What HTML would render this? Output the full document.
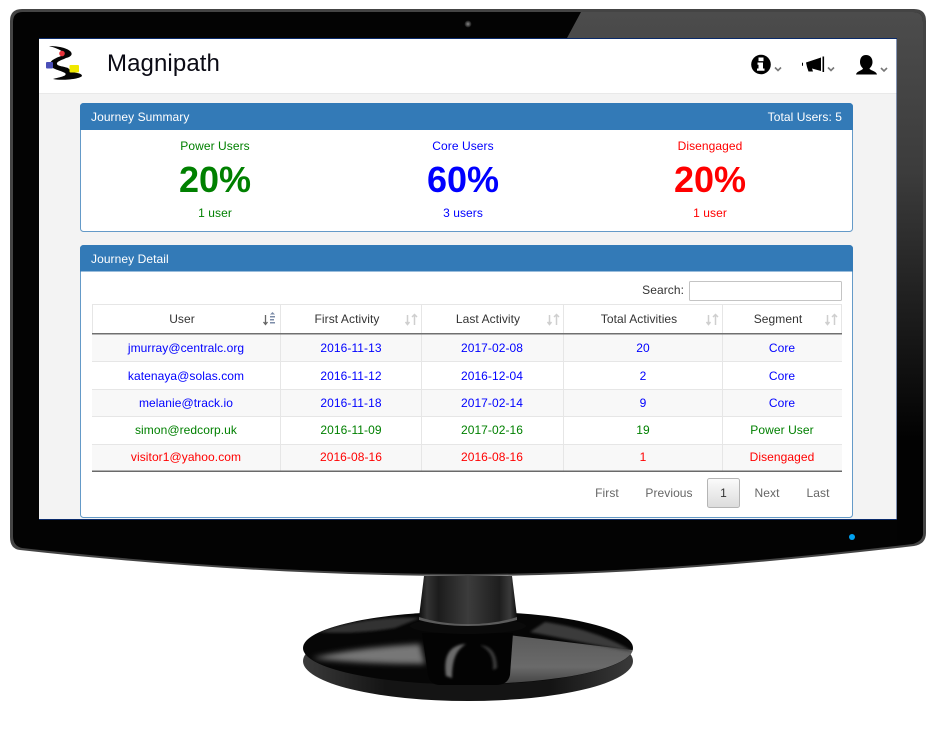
<!DOCTYPE html>
<html>
<head>
<meta charset="utf-8">
<style>
html,body{margin:0;padding:0;background:#fff;width:942px;height:738px;overflow:hidden}
body{position:relative;font-family:"Liberation Sans",Arial,sans-serif;font-size:12px;color:#333}
svg.abs{position:absolute;left:0;top:0}
.t{position:absolute;white-space:nowrap;line-height:14px;letter-spacing:.07px}
.c{transform:translateX(-50%)}
.r{transform:translateX(-100%)}
.blue{color:#0000ff}.green{color:#008000}.red{color:#ff0000}
</style>
</head>
<body>
<svg class="abs" width="942" height="738" viewBox="0 0 942 738">
<defs>
<linearGradient id="wedge" x1="0" y1="0" x2="0" y2="1">
<stop offset="0" stop-color="#4c4c4c"/><stop offset=".3" stop-color="#3c3c3c"/><stop offset=".62" stop-color="#161616"/><stop offset=".8" stop-color="#020202"/><stop offset="1" stop-color="#020202"/>
</linearGradient>
<linearGradient id="neck" x1="0" y1="0" x2="1" y2="0">
<stop offset="0" stop-color="#0c0c0c"/><stop offset=".08" stop-color="#333"/><stop offset=".2" stop-color="#1c1c1c"/><stop offset=".5" stop-color="#3c3c3c"/><stop offset=".82" stop-color="#1e1e1e"/><stop offset=".93" stop-color="#3a3a3a"/><stop offset="1" stop-color="#0c0c0c"/>
</linearGradient>
<linearGradient id="baseR" x1="0" y1="0" x2="0" y2="1">
<stop offset="0" stop-color="#5a5a5a"/><stop offset=".5" stop-color="#6a6a6a"/><stop offset="1" stop-color="#1f1f1f"/>
</linearGradient>
<linearGradient id="lip" x1="0" y1="0" x2="1" y2="0">
<stop offset="0" stop-color="#3a3a3a"/><stop offset=".25" stop-color="#141414"/><stop offset=".75" stop-color="#141414"/><stop offset="1" stop-color="#3a3a3a"/>
</linearGradient>
<radialGradient id="glow"><stop offset="0" stop-color="#888"/><stop offset="1" stop-color="#111"/></radialGradient>
<filter id="bl1" x="-20%" y="-50%" width="140%" height="200%"><feGaussianBlur stdDeviation="3"/></filter>
<filter id="bl2" x="-30%" y="-30%" width="160%" height="160%"><feGaussianBlur stdDeviation="1.200"/></filter>
<clipPath id="top"><ellipse cx="468" cy="648" rx="165" ry="36"/></clipPath>
<linearGradient id="pg" x1="0" y1="0" x2="0" y2="1"><stop offset="0" stop-color="#fbfbfb"/><stop offset="1" stop-color="#dcdcdc"/></linearGradient>
</defs>
<!-- stand -->
<ellipse cx="468" cy="661" rx="165" ry="40" fill="url(#lip)"/>
<ellipse cx="468" cy="648" rx="165" ry="36.500" fill="#060606"/>
<g clip-path="url(#top)">
<path d="M312 658C345 650 385 646 420 644L425 664C385 664 340 662 312 658Z" fill="#777" filter="url(#bl1)"/>
<path d="M500 634L640 651L640 700H500Z" fill="url(#baseR)"/>
<path d="M545 622C585 628 615 640 633 652C600 646 570 640 530 632Z" fill="#3a3a3a" filter="url(#bl2)"/>
<path d="M318 632C350 620 395 616 420 618L395 628C370 632 345 634 318 632Z" fill="#333" filter="url(#bl2)"/>
</g>
<path d="M422 633H513L510 675Q508 685 496 685H440Q430 685 428 675Z" fill="#030303"/>
<g filter="url(#bl2)">
<path d="M446 676C443 655 450 645 466 644C456 650 452 660 452 678Z" fill="#6a6a6a"/>
<path d="M480 645C490 646 497 652 497 668L493 670C494 656 489 650 480 645Z" fill="#3a3a3a"/>
</g>
<ellipse cx="468" cy="626" rx="58" ry="8" fill="#0a0a0a"/>
<path d="M424 576H512L517 617Q500 624 468 624T419 617Z" fill="url(#neck)"/>
<path d="M419 617Q440 624 468 624T517 617L517 620Q495 626 468 626T419 620Z" fill="#5c5c5c"/>
<!-- bezel -->
<path d="M22 9H914Q926 9 926 21V533Q926 544 914 546C760 564 610 576 468 576C320 576 165 566 20 550Q10 549 10 537V21Q10 9 22 9Z" fill="#444"/>
<path d="M23 12H913Q923 12 923 22V533Q923 541 913 544C760 562 610 574 468 574C320 574 165 564 22 548Q13 546 13 536V22Q13 12 23 12Z" fill="#030303"/>
<path d="M581 12H913Q923 12 923 22V533Q923 541 913 543L897 545V38H567Z" fill="url(#wedge)"/>
<circle cx="468" cy="24" r="3.500" fill="url(#glow)"/>
<circle cx="852" cy="537" r="3" fill="#00a2f2"/>
<!-- screen -->
<rect x="39" y="38" width="858" height="482" fill="#0a2a6a"/>
<rect x="39" y="39" width="857.500" height="480" fill="#f3f3f3"/>
<rect x="39" y="39" width="857.500" height="54" fill="#fff"/>
<rect x="39" y="93" width="857.500" height="1" fill="#e9e9e9"/>
<!-- logo -->
<path d="M49 46C58 46 68 48 71 52C73 55 70 57 66 58C62 60 58 61 57 63C56 66 62 66 68 68L72 72C76 73 82 73 82 76C80 79 62 81 53 79C60 77 68 76 65 73C60 70 50 69 50 64C50 60 58 57 64 55C66 53 60 49 49 46Z" fill="#050505"/>
<circle cx="62" cy="53.500" r="2.800" fill="#e8343c"/>
<rect x="46" y="62" width="7" height="6.500" rx="1" fill="#4a4fb8"/>
<rect x="69.500" y="65" width="9.500" height="7.500" rx="1" fill="#f0e800"/>
<!-- info icon -->
<circle cx="761" cy="64.500" r="9.800" fill="#000"/>
<path d="M758.500 57.500h5v3.600h-5zM757.500 62.500h5.500v6h1.500v2.300h-7.500v-2.300h1.500v-3.700h-1z" fill="#fff"/>
<path d="M775 67.500l3 3 3-3" fill="none" stroke="#777" stroke-width="1.600"/>
<!-- megaphone -->
<path d="M802 63l1-.5v3.500l-1-.5zM806 62.500L821 57.500V71L812 68.500L813 71.500H808.500L807 67Z" fill="#000"/>
<rect x="822.500" y="56.500" width="1.600" height="15.500" fill="#000"/>
<path d="M828 67.500l3 3 3-3" fill="none" stroke="#777" stroke-width="1.600"/>
<!-- user -->
<path d="M866 55C870 55 872.500 58 872.500 62C872.500 65 871 67 869.500 68.500C870 70.500 876.500 71 877 74.500H856C856.500 71 862.500 70.500 863 68.500C861.500 67 860 65 860 62C860 58 862 55 866 55Z" fill="#000"/>
<path d="M881 68l3 3 3-3" fill="none" stroke="#777" stroke-width="1.600"/>
<!-- panels -->
<rect x="80.500" y="103.500" width="772" height="128" rx="3" fill="#fff" stroke="#337ab7" stroke-opacity=".75"/>
<path d="M84 103H849Q853 103 853 107V130H80V107Q80 103 84 103Z" fill="#337ab7"/>
<rect x="80.500" y="245.500" width="772" height="272" rx="3" fill="#fff" stroke="#337ab7" stroke-opacity=".75"/>
<path d="M84 245H849Q853 245 853 249V271.500H80V249Q80 245 84 245Z" fill="#337ab7"/>
<!-- table -->
<rect x="92" y="334" width="750" height="28" fill="#f8f8f8"/>
<rect x="92" y="389.500" width="750" height="27.500" fill="#f8f8f8"/>
<rect x="92" y="444" width="750" height="27.500" fill="#f8f8f8"/>
<g stroke="#e6e6e6" stroke-width="1">
<path d="M92 304.500H842M92 361.500H842M92 389.500H842M92 416.500H842M92 444.500H842"/>
<path d="M92.500 305V334M280.500 305V471M421.500 305V471M563.500 305V471M722.500 305V471M841.500 305V334"/>
</g>
<rect x="92" y="333" width="750" height="1.500" fill="#707070"/>
<rect x="92" y="470.500" width="750" height="1.500" fill="#6a6a6a"/>
<!-- search -->
<rect x="689.500" y="281.500" width="152" height="19" rx="1" fill="#fff" stroke="#c4c4c4"/>
<!-- sort icons -->
<path d="M265.500 315v9M263.500 322l2 2.500 2-2.500" fill="none" stroke="#666" stroke-width="1.300"/>
<path d="M270 314.500l2.500-2.500 2.500 2.500zM270 316h5v1.500h-5zM270 319h4v1.500h-4zM270 322h5v1.500h-5z" fill="#7c8ca8"/>
<g fill="none" stroke="#cfcfcf" stroke-width="1.500">
<path d="M407.500 315v9M405.500 322l2 2.500 2-2.500M414.500 325v-10M412 317l2.500-2.500 2.500 2.500"/>
<path d="M549.500 315v9M547.500 322l2 2.500 2-2.500M556.500 325v-10M554 317l2.500-2.500 2.500 2.500"/>
<path d="M708.500 315v9M706.500 322l2 2.500 2-2.500M715.500 325v-10M713 317l2.500-2.500 2.500 2.500"/>
<path d="M827.500 315v9M825.500 322l2 2.500 2-2.500M834.500 325v-10M832 317l2.500-2.500 2.500 2.500"/>
</g>
<!-- pager button -->
<rect x="707.500" y="478.500" width="32" height="29" rx="2" fill="url(#pg)" stroke="#b5b5b5"/>
</svg>

<div class="t" style="left:107px;top:50px;font-size:24px;line-height:28px;color:#0a0a14;letter-spacing:.1px">Magnipath</div>

<div class="t" style="left:91px;top:110px;color:#fff">Journey Summary</div>
<div class="t r" style="left:842px;top:110px;color:#fff">Total Users: 5</div>

<div class="t c green" style="left:215px;top:139px">Power Users</div>
<div class="t c blue" style="left:463px;top:139px">Core Users</div>
<div class="t c red" style="left:710px;top:139px">Disengaged</div>

<div class="t c green" style="left:215px;top:160px;font-size:36px;line-height:40px;font-weight:bold;letter-spacing:0">20%</div>
<div class="t c blue" style="left:463px;top:160px;font-size:36px;line-height:40px;font-weight:bold;letter-spacing:0">60%</div>
<div class="t c red" style="left:710px;top:160px;font-size:36px;line-height:40px;font-weight:bold;letter-spacing:0">20%</div>

<div class="t c green" style="left:215px;top:206px">1 user</div>
<div class="t c blue" style="left:463px;top:206px">3 users</div>
<div class="t c red" style="left:710px;top:206px">1 user</div>

<div class="t" style="left:91px;top:252px;color:#fff">Journey Detail</div>
<div class="t r" style="left:684px;top:283px">Search:</div>

<div class="t c" style="left:182px;top:312px">User</div>
<div class="t c" style="left:347px;top:312px">First Activity</div>
<div class="t c" style="left:488px;top:312px">Last Activity</div>
<div class="t c" style="left:639px;top:312px">Total Activities</div>
<div class="t c" style="left:778px;top:312px">Segment</div>

<div class="t c blue" style="left:186px;top:341px">jmurray@centralc.org</div>
<div class="t c blue" style="left:351px;top:341px">2016-11-13</div>
<div class="t c blue" style="left:492px;top:341px">2017-02-08</div>
<div class="t c blue" style="left:643px;top:341px">20</div>
<div class="t c blue" style="left:782px;top:341px">Core</div>

<div class="t c blue" style="left:186px;top:369px">katenaya@solas.com</div>
<div class="t c blue" style="left:351px;top:369px">2016-11-12</div>
<div class="t c blue" style="left:492px;top:369px">2016-12-04</div>
<div class="t c blue" style="left:643px;top:369px">2</div>
<div class="t c blue" style="left:782px;top:369px">Core</div>

<div class="t c blue" style="left:186px;top:396px">melanie@track.io</div>
<div class="t c blue" style="left:351px;top:396px">2016-11-18</div>
<div class="t c blue" style="left:492px;top:396px">2017-02-14</div>
<div class="t c blue" style="left:643px;top:396px">9</div>
<div class="t c blue" style="left:782px;top:396px">Core</div>

<div class="t c green" style="left:186px;top:423px">simon@redcorp.uk</div>
<div class="t c green" style="left:351px;top:423px">2016-11-09</div>
<div class="t c green" style="left:492px;top:423px">2017-02-16</div>
<div class="t c green" style="left:643px;top:423px">19</div>
<div class="t c green" style="left:782px;top:423px">Power User</div>

<div class="t c red" style="left:186px;top:450px">visitor1@yahoo.com</div>
<div class="t c red" style="left:351px;top:450px">2016-08-16</div>
<div class="t c red" style="left:492px;top:450px">2016-08-16</div>
<div class="t c red" style="left:643px;top:450px">1</div>
<div class="t c red" style="left:782px;top:450px">Disengaged</div>

<div class="t c" style="left:607px;top:486px;color:#666">First</div>
<div class="t c" style="left:669px;top:486px;color:#666">Previous</div>
<div class="t c" style="left:723.500px;top:486px;color:#333">1</div>
<div class="t c" style="left:767px;top:486px;color:#666">Next</div>
<div class="t c" style="left:818px;top:486px;color:#666">Last</div>
</body>
</html>
